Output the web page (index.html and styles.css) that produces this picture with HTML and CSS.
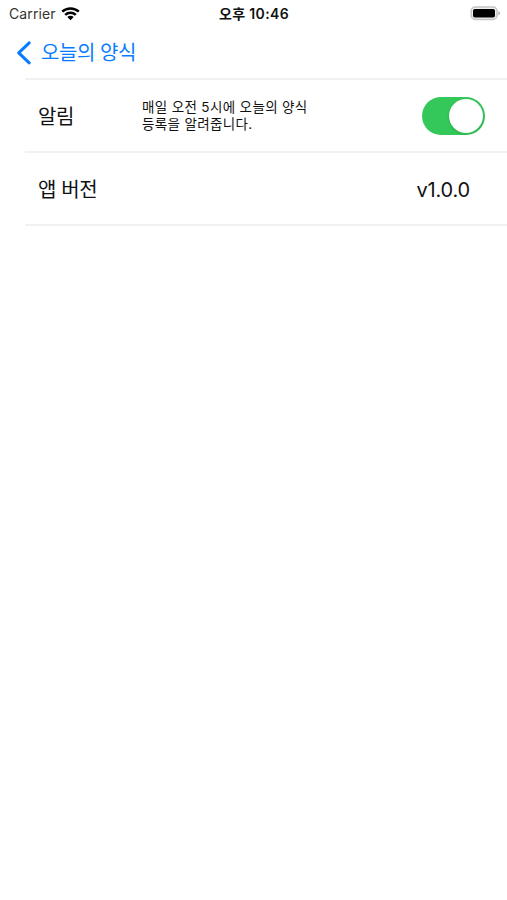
FILE: index.html
```html
<!DOCTYPE html>
<html lang="ko">
<head>
    <meta charset="UTF-8">
    <meta name="viewport" content="width=device-width, initial-scale=1">
    <title>오늘의 양식</title>
    <link rel="stylesheet" href="styles.css">
</head>
<body>
<div class="status">
    <div class="carrier">
        <span>Carrier</span>
        <svg class="wifi" width="19" height="14" viewBox="0 0 19 14">
            <path d="M1.2 4.7C5.8 .4 13.2 .4 17.8 4.7M4.2 7.8C7.2 5 11.8 5 14.8 7.8" fill="none" stroke="#000" stroke-width="2.5"/>
            <path d="M6.3 10.1C8.1 8.4 10.9 8.4 12.7 10.1L9.5 13.3Z"/>
        </svg>
    </div>
    <div class="time">오후 10:46</div>
    <svg class="battery" width="31" height="15" viewBox="0 0 31 15">
        <rect x="1.2" y="1" width="25.8" height="12.4" rx="4" fill="#eee" stroke="#c4c4c4" stroke-width="1.5"/>
        <rect x="3" y="3" width="22" height="8.6" rx="1.8"/>
        <path d="M28.4 5v4.5q1.6-.8 1.6-2.2T28.4 5z" fill="#b0b0b0"/>
    </svg>
</div>
<div class="nav">
    <svg class="back" width="16" height="24" viewBox="0 0 16 24">
        <path d="M13.2 1.8L2.7 11.8l10.5 10" fill="none" stroke="#087cff" stroke-width="3" stroke-linecap="round" stroke-linejoin="round"/>
    </svg>
    <span class="title">오늘의 양식</span>
</div>
<div class="list">
    <div class="row">
        <div class="label">알림</div>
        <div class="desc">매일 오전 5시에 오늘의 양식<br>등록을 알려줍니다.</div>
        <div class="switch"><div class="knob"></div></div>
    </div>
    <div class="row">
        <div class="label">앱 버전</div>
        <div class="version">v1.0.0</div>
    </div>
</div>
</body>
</html>
```
FILE: styles.css
```css
* {
    box-sizing: border-box;
}

html, body {
    margin: 0;
    padding: 0;
    background: #fff;
}

body {
    font-family: Inter, "Noto Sans CJK KR", sans-serif;
    color: #111;
}

svg {
    display: block;
}

.status {
    display: grid;
    grid-template-columns: 1fr auto 1fr;
    align-items: center;
    height: 27px;
    padding: 0 6px 0 9px;
    font-size: 14px;
    line-height: 27px;
}

.carrier {
    display: flex;
    align-items: center;
    gap: 5px;
    color: #333;
    letter-spacing: 0.1px;
}

.time {
    margin-right: 2px;
    padding-top: 1px;
    font-size: 14px;
    line-height: 26px;
    font-weight: 600;
    letter-spacing: 0.35px;
}

.battery {
    justify-self: end;
}

.nav {
    display: flex;
    align-items: center;
    height: 51px;
    padding-left: 16px;
    color: #087cff;
}

.title {
    margin-left: 9px;
    font-size: 20px;
    line-height: 28px;
    letter-spacing: -0.45px;
}

.list {
    margin-left: 25px;
    border-top: 2px solid #f1f1f1;
}

.row {
    display: flex;
    align-items: center;
    height: 73px;
    padding-left: 12px;
    border-bottom: 2px solid #f1f1f1;
}

.label {
    width: 105px;
    padding-left: 1px;
    font-size: 20px;
    letter-spacing: -0.4px;
}

.desc {
    padding-top: 1px;
    font-size: 13.5px;
    line-height: 17px;
    letter-spacing: 0.35px;
}

.switch {
    display: flex;
    justify-content: flex-end;
    align-items: center;
    width: 63px;
    height: 38px;
    margin: 0 22px 0 auto;
    padding: 2px;
    border-radius: 19px;
    background: #34c759;
}

.knob {
    width: 34px;
    height: 34px;
    border-radius: 50%;
    background: #fff;
    box-shadow: 0 1px 3px rgba(0, 0, 0, 0.15);
}

.version {
    margin: 0 37px 0 auto;
    padding-top: 2px;
    font-size: 20px;
    letter-spacing: -0.2px;
}
```
